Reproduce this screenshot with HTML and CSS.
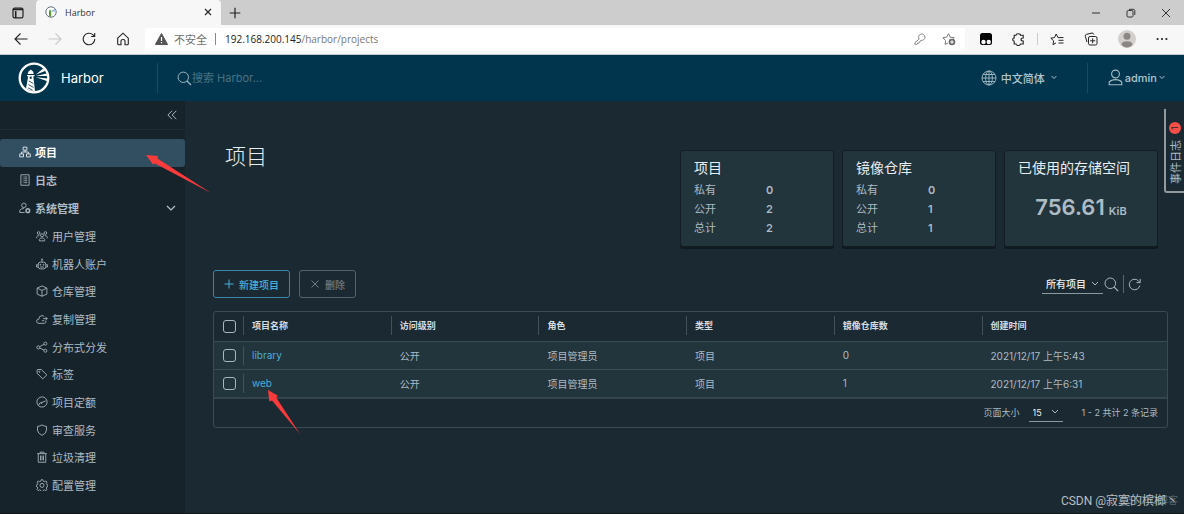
FILE: index.html
```html
<!DOCTYPE html>
<html lang="zh-CN">
<head>
<meta charset="utf-8">
<title>Harbor</title>
<link rel="stylesheet" href="styles.css">
</head>
<body>
<div class="tabbar">
  <button class="tab-menu" aria-label="标签页操作"><svg width="12" height="12" viewBox="0 0 12 12"><rect x="1" y="1.2" width="10" height="9.6" rx="1.6" fill="none" stroke="#222" stroke-width="1.2"/><path d="M1 2.5h10M3.7 4v7" stroke="#222" stroke-width="1.6"/></svg></button>
  <div class="tab">
    <svg width="12" height="12" viewBox="0 0 12 12"><circle cx="6" cy="6" r="5.2" fill="#fff" stroke="#56606a" stroke-width=".9"/><path d="M4 10.6V5l1-1.6L6.200 5v5.800z" fill="#5c9a3c"/><path d="M6.500 4.500 10 2.800l1 2.800-4.500.2z" fill="#9cc0df"/></svg>
    <span class="tab-title">Harbor</span>
    <button aria-label="关闭标签页"><svg width="8" height="8" viewBox="0 0 8 8"><path d="M1 1l6 6M7 1 1 7" stroke="#222" stroke-width="1.100"/></svg></button>
  </div>
  <button class="new-tab" aria-label="新建标签页"><svg width="12" height="12" viewBox="0 0 12 12"><path d="M6 .7v10.600M.7 6h10.600" stroke="#222" stroke-width="1.200"/></svg></button>
  <div class="window-buttons">
    <button aria-label="最小化"><svg width="10" height="10" viewBox="0 0 10 10"><path d="M1 5h8" stroke="#333"/></svg></button>
    <button aria-label="还原"><svg width="10" height="10" viewBox="0 0 10 10"><g fill="none" stroke="#333"><rect x="1" y="2.500" width="6" height="6.500" rx="1.200"/><path d="M3 1.300h4.300q1.500 0 1.500 1.500V7"/></g></svg></button>
    <button aria-label="关闭"><svg width="10" height="10" viewBox="0 0 10 10"><path d="M1 1l8 8M9 1 1 9" stroke="#333"/></svg></button>
  </div>
</div>

<div class="toolbar">
  <div class="nav-buttons">
    <button aria-label="后退"><svg width="14" height="14" viewBox="0 0 14 14"><path d="M13.500 7H1.200M6.500 1.500 1 7l5.500 5.500" fill="none" stroke="#222" stroke-width="1.100"/></svg></button>
    <button aria-label="前进" disabled><svg width="14" height="14" viewBox="0 0 14 14"><path d="M.5 7h12.300M7.500 1.500 13 7l-5.500 5.500" fill="none" stroke="#c9c9c9" stroke-width="1.100"/></svg></button>
    <button aria-label="刷新"><svg width="14" height="14" viewBox="0 0 14 14"><path d="M12.800 7A5.800 5.800 0 1 1 11 2.800L12.600 4.300M12.700 1v3.500H9.200" fill="none" stroke="#222" stroke-width="1.100"/></svg></button>
    <button aria-label="主页"><svg width="14" height="14" viewBox="0 0 14 14"><path d="M1.700 6.200 7 1.200l5.300 5V11.700q0 1-1 1H9V8.800Q9 7.500 7 7.500T5 8.800v3.900H2.700q-1 0-1-1z" fill="none" stroke="#222" stroke-width="1.100"/></svg></button>
  </div>
  <div class="address">
    <svg width="13" height="12" viewBox="0 0 13 12"><path d="M6.500.5 12.600 11.500H.4z" fill="#555" stroke="#555" stroke-linejoin="round"/><path d="M6.500 4v4M6.500 9v1.300" stroke="#fff" stroke-width="1.200"/></svg>
    <span class="insecure">不安全</span>
    <span class="address-rule"></span>
    <span class="url">192.168.200.145<span class="path">/harbor/projects</span></span>
    <button aria-label="密码"><svg width="12" height="12" viewBox="0 0 12 12"><path d="M5.200 6.100A3.200 3.200 0 1 1 7 7.300L6 8.200v1H5l-.2 1.100H3.500l-.3 1H.9V9.700zM8.700 3.400h.5" fill="none" stroke="#888"/></svg></button>
    <button aria-label="收藏"><svg width="14" height="14" viewBox="0 0 14 14"><path d="M6 11 3 12.400l.6-3.800L.9 5.800l3.700-.6L6.500 1.700l1.800 3.500 4 .5-1 1" fill="none" stroke="#777"/><circle cx="10" cy="10" r="3.300" fill="#666"/><path d="M10 8.200v3.600M8.200 10h3.600" stroke="#fff"/></svg></button>
  </div>
  <div class="tool-buttons">
    <button aria-label="扩展程序"><svg width="12" height="12" viewBox="0 0 12 12"><rect width="12" height="12" rx="2.500" fill="#000"/><circle cx="3.500" cy="9" r="2.200" fill="#fff"/><circle cx="8.700" cy="9" r="2.200" fill="#fff"/></svg></button>
    <button aria-label="扩展"><svg width="13" height="13" viewBox="0 0 13 13"><path d="M4 2.300Q4 .8 6.300.8T8.500 2.300H11.200V5Q9 5 9 6.500T11.200 8v3H8.500Q8.300 12.500 6.300 12.500T4 11H2.200V8.200Q.7 8 .7 6.500T2.200 5V2.300z" fill="none" stroke="#222" stroke-width="1.100"/></svg></button>
    <span class="tool-rule"></span>
    <button aria-label="收藏夹"><svg width="14" height="13" viewBox="0 0 14 13"><path d="M6 9.900 3 11.700l.6-3.900L.8 5.200l3.700-.6L6.200 1 8 4.600h5.500M8.500 7.300h5M8.500 10h5" fill="none" stroke="#222"/></svg></button>
    <button aria-label="集锦"><svg width="14" height="14" viewBox="0 0 14 14"><g fill="none" stroke="#222"><rect x="4.500" y="4.500" width="8.500" height="8.500" rx="1.600"/><path d="M3 10 1.300 4.300q-.4-1.500 1-1.900L8 1q1.200-.3 1.800 1.500M8.700 6.300v5M6.200 8.800h5"/></g></svg></button>
    <button aria-label="个人资料"><svg width="18" height="18" viewBox="0 0 18 18"><circle cx="9" cy="9" r="9" fill="#d3cfcc"/><circle cx="9" cy="6.300" r="3.500" fill="#8b8784"/><path d="M3.500 14.500Q4 11.300 9 11.300t5.500 3.200Q12.500 17.500 9 17.500t-5.500-3z" fill="#8b8784"/></svg></button>
    <button aria-label="设置及其他"><svg width="12" height="4" viewBox="0 0 12 4"><g fill="#222"><circle cx="1.600" cy="2" r="1.100"/><circle cx="6" cy="2" r="1.100"/><circle cx="10.400" cy="2" r="1.100"/></g></svg></button>
  </div>
</div>

<header class="header">
  <a class="brand" href="#">
    <svg width="32" height="32" viewBox="0 0 32 32"><circle cx="16" cy="16" r="14.300" fill="none" stroke="#fff" stroke-width="2.300"/><path d="M9 13h7.500v1.300h-1.200l1.700 14.700q-5 .5-9-2.500l2.200-12.200H9zM9.700 12 10.300 9.700 12.800 7.500 15.200 9.700l.5 2.300z" fill="#fff"/><path d="M10.800 19l4.600 2.500M10.400 22.500l5.200 3M10 25.800l4.600 2.500" stroke="#00364d" stroke-width=".8"/><path d="M11.700 14.600v2.200h2v-2.200z" fill="#00364d"/><path d="M18 12.500 25.200 6.500l2 2.500zM18 13.900l10.500-2.500.8 2.600zM18 15.200l11.500 1.400v2.600z" fill="#fff"/></svg>
    <span>Harbor</span>
  </a>
  <label class="search">
    <svg width="15" height="15" viewBox="0 0 15 15"><circle cx="6.300" cy="6.300" r="5.200" fill="none" stroke="#9bb3be"/><path d="M10 10l4 4" stroke="#9bb3be" stroke-width="1.200"/></svg>
    <input type="search" placeholder="搜索 Harbor..." aria-label="搜索 Harbor">
  </label>
  <button class="language">
    <svg width="16" height="16" viewBox="0 0 16 16"><g fill="none" stroke="#a6bbc5" stroke-width=".9"><circle cx="8" cy="8" r="7"/><ellipse cx="8" cy="8" rx="3.400" ry="7"/><path d="M8 1v14M1 8h14M2 4.500h12M2 11.500h12"/></g></svg>
    <span>中文简体</span>
    <svg width="6" height="5" viewBox="0 0 6 5"><path d="M.6 1 3 3.500 5.400 1" fill="none" stroke="#a6bbc5"/></svg>
  </button>
  <button class="account">
    <svg width="15" height="17" viewBox="0 0 15 17"><g fill="none" stroke="#a6bbc5" stroke-width="1.100"><circle cx="7.500" cy="5" r="3.900"/><path d="M1.200 15.700v-2.500Q3.200 10.600 7.500 10.600t6.300 2.600v2.500z"/></g></svg>
    <span>admin</span>
    <svg width="6" height="5" viewBox="0 0 6 5"><path d="M.6 1 3 3.500 5.400 1" fill="none" stroke="#a6bbc5"/></svg>
  </button>
</header>

<div class="body">
  <nav class="sidebar" aria-label="主导航">
    <div class="collapse"><button aria-label="收起"><svg width="10" height="10" viewBox="0 0 10 10"><path d="M5 .8.900 5 5 9.200M9.300.8 5.200 5l4.100 4.200" fill="none" stroke="#a9b6be"/></svg></button></div>
    <ul class="menu">
      <li><a class="item active" href="#"><svg class="icon" viewBox="0 0 16 16"><path d="M5.500 1.500h5v4h-5zM1 10.500h5v4H1zM10 10.500h5v4h-5zM8 5.500V8M3.500 10.500V8h9v2.500"/></svg>项目</a></li>
      <li><a class="item" href="#"><svg class="icon" viewBox="0 0 16 16"><path d="M2.500 1h11v14h-11zM5 4h1M7 4h4M5 6.500h1M7 6.500h4M5 9h1M7 9h4M5 11.500h1M7 11.500h4"/></svg>日志</a></li>
      <li>
        <button class="item"><svg class="icon" viewBox="0 0 16 16"><circle cx="6.500" cy="4.500" r="3"/><path d="M7.500 14H1v-3q1.500-2.300 5.500-2.300"/><circle cx="11.800" cy="11.500" r="2.400" stroke-width="2"/></svg>系统管理<svg class="caret" width="10" height="6" viewBox="0 0 10 6"><path d="M1 1l4 4 4-4" fill="none" stroke="#b6c3ca" stroke-width="1.200"/></svg></button>
        <ul class="submenu">
          <li><a href="#"><svg class="icon" viewBox="0 0 16 16"><circle cx="8" cy="7" r="2"/><path d="M4.500 14.500v-2q1-2 3.500-2t3.500 2v2z"/><circle cx="3.500" cy="4" r="1.800"/><circle cx="12.500" cy="4" r="1.800"/><path d="M1 11V9q.7-1.500 3.500-1.500M15 11V9q-.7-1.500-3.500-1.500"/></svg>用户管理</a></li>
          <li><a href="#"><svg class="icon" viewBox="0 0 16 16"><rect x="3" y="5.500" width="10" height="9" rx="3"/><path d="M8 5.500V2M3 9H.7v3H3M13 9h2.300v3H13M5.500 12h5"/><circle cx="8" cy="1.800" r=".7"/><circle cx="6" cy="9" r=".6"/><circle cx="10" cy="9" r=".6"/></svg>机器人账户</a></li>
          <li><a href="#"><svg class="icon" viewBox="0 0 16 16"><path d="M8 1.200 14.500 4.200v8L8 15l-6.500-2.800v-8zM1.500 4.200 8 7.200l6.500-3M8 7.200V15"/></svg>仓库管理</a></li>
          <li><a href="#"><svg class="icon" viewBox="0 0 16 16"><path d="M13.500 10.500q0 3.300-2.500 3.300H4Q.8 13.800.8 11T3.800 8.200Q4 3.500 8 3.500q2 0 3 1.500M9.500 7.500H15M12.800 5.300 15 7.500l-2.200 2.200M8 10.300h3"/></svg>复制管理</a></li>
          <li><a href="#"><svg class="icon" viewBox="0 0 16 16"><circle cx="3" cy="8.500" r="2"/><circle cx="12.500" cy="3.500" r="2"/><circle cx="12.500" cy="13" r="2"/><path d="M4.800 7.600 10.700 4.400M4.800 9.400l5.900 2.700"/></svg>分布式分发</a></li>
          <li><a href="#"><svg class="icon" viewBox="0 0 16 16"><path d="M1.500 2.500V7l7.500 7.500 5.500-5.300L7 2H2z"/><circle cx="4.500" cy="5" r=".8"/></svg>标签</a></li>
          <li><a href="#"><svg class="icon" viewBox="0 0 16 16"><circle cx="8" cy="8" r="6.800"/><path d="M3.500 12.500Q4 8.500 8 8.500l5-2M8 8.500 7 10.500"/></svg>项目定额</a></li>
          <li><a href="#"><svg class="icon" viewBox="0 0 16 16"><path d="M8 1.200Q10.500 3 14 3.200V8q0 4.500-6 7.200Q2 12.500 2 8V3.200Q5.500 3 8 1.200z"/></svg>审查服务</a></li>
          <li><a href="#"><svg class="icon" viewBox="0 0 16 16"><path d="M1.500 3.500h13M3 3.500V15h10V3.500M5.500 3.500v-2h5v2M6 6v6.500M8 6v6.500M10 6v6.500"/></svg>垃圾清理</a></li>
          <li><a href="#"><svg class="icon" viewBox="0 0 16 16"><path d="M6.800 1h2.400l.5 2 1.600.7 1.900-1.100 1.500 1.600-1 1.900.7 1.500 1.600.4v2l-1.700.5-.6 1.600 1 1.900-1.600 1.500-1.800-1-1.600.6-.5 1.900H6.800l-.5-1.900-1.600-.6-1.900 1-1.500-1.600 1-1.800-.6-1.600L.5 10V8l1.300-.4.6-1.600-1-1.800 1.500-1.600 1.800 1L6.300 3z"/><circle cx="8" cy="8.500" r="2.700"/></svg>配置管理</a></li>
        </ul>
      </li>
    </ul>
  </nav>

  <main class="content">
    <div class="summary">
      <h1>项目</h1>
      <section class="card">
        <h2>项目</h2>
        <dl><dt>私有</dt><dd>0</dd><dt>公开</dt><dd>2</dd><dt>总计</dt><dd>2</dd></dl>
      </section>
      <section class="card">
        <h2>镜像仓库</h2>
        <dl><dt>私有</dt><dd>0</dd><dt>公开</dt><dd>1</dd><dt>总计</dt><dd>1</dd></dl>
      </section>
      <section class="card">
        <h2>已使用的存储空间</h2>
        <p class="storage"><span>756.61</span><small>KiB</small></p>
      </section>
    </div>

    <div class="actions">
      <button class="btn primary"><svg width="10" height="10" viewBox="0 0 10 10"><path d="M5 .5v9M.5 5h9" stroke="currentColor"/></svg>新建项目</button>
      <button class="btn" disabled><svg width="10" height="10" viewBox="0 0 10 10"><path d="M1.500 1.500l7 7M8.500 1.500l-7 7" stroke="currentColor"/></svg>删除</button>
      <div class="filters">
        <span class="select filter-select"><select aria-label="项目筛选"><option>所有项目</option></select><svg width="8" height="6" viewBox="0 0 8 6"><path d="M1 1l3 3 3-3" fill="none" stroke="#a9b6be"/></svg></span>
        <button aria-label="搜索"><svg width="15" height="15" viewBox="0 0 15 15"><circle cx="6.300" cy="6.300" r="5.300" fill="none" stroke="#a9b6be"/><path d="M10.200 10.200l4 4" stroke="#a9b6be" stroke-width="1.200"/></svg></button>
        <span class="filter-rule"></span>
        <button aria-label="刷新列表"><svg width="13" height="13" viewBox="0 0 13 13"><path d="M11.800 7.500A5.300 5.300 0 1 1 10.300 2.700L12 4.400M12.200.8v3.800H8.500" fill="none" stroke="#a9b6be"/></svg></button>
      </div>
    </div>

    <div class="datagrid">
      <table>
        <colgroup><col class="col-check"><col class="col"><col class="col"><col class="col"><col class="col"><col class="col"><col></colgroup>
        <thead><tr>
          <th><input type="checkbox" aria-label="全选"></th>
          <th><span>项目名称</span></th><th><span>访问级别</span></th><th><span>角色</span></th><th><span>类型</span></th><th><span>镜像仓库数</span></th><th><span>创建时间</span></th>
        </tr></thead>
        <tbody>
          <tr><td><input type="checkbox" aria-label="选择 library"></td><td><span><a href="#">library</a></span></td><td>公开</td><td>项目管理员</td><td>项目</td><td>0</td><td>2021/12/17 上午5:43</td></tr>
          <tr><td><input type="checkbox" aria-label="选择 web"></td><td><span><a href="#">web</a></span></td><td>公开</td><td>项目管理员</td><td>项目</td><td>1</td><td>2021/12/17 上午6:31</td></tr>
        </tbody>
      </table>
      <div class="pager">
        <label for="page-size">页面大小</label>
        <span class="select page-select"><select id="page-size"><option>15</option></select><svg width="8" height="6" viewBox="0 0 8 6"><path d="M1 1l3 3 3-3" fill="none" stroke="#a9b6be"/></svg></span>
        <span>1 - 2 共计 2 条记录</span>
      </div>
    </div>
  </main>
</div>

<button class="event-log">事件日志<span class="badge">1</span></button>
<svg class="pointer pointer-menu" width="65" height="38" viewBox="0 0 65 38"><path d="M0 0 12 1 11.500 3.500 65 38 9 8.500 7 9.500z" fill="#fb3b3b"/></svg>
<svg class="pointer pointer-row" width="32" height="44" viewBox="0 0 32 44"><path d="M0 0 9.500 5.500 8.500 8 32 44 4 10.500 1.300 11.500z" fill="#fb3b3b"/></svg>
<div class="watermark site">@51CTO博客</div>
<div class="watermark author">CSDN @寂寞的槟榔丶</div>
</body>
</html>
```
FILE: styles.css
```css
* { box-sizing: border-box; }

body {
  margin: 0;
  min-height: 100vh;
  display: flex;
  flex-direction: column;
  position: relative;
  background: #1b2a32;
  border-bottom: 1px solid #0e161b;
  color: #adbbc4;
  font-family: Inter, "Noto Sans CJK SC", sans-serif;
  font-size: 10px;
}

button, input, select { font: inherit; color: inherit; }
button { display: flex; align-items: center; padding: 0; border: 0; background: none; }
svg { display: block; flex: none; }
a { color: inherit; text-decoration: none; }
ul { margin: 0; padding: 0; list-style: none; }

/* Browser frame */
.tabbar, .toolbar { display: flex; align-items: center; font-family: "Open Sans", "Noto Sans CJK SC", sans-serif; }
.tabbar { height: 25px; background: #cdcdcd; }
.tab-menu { width: 36px; justify-content: center; }
.tab {
  width: 185px;
  height: 25px;
  padding: 0 9px 1px;
  display: flex;
  align-items: center;
  gap: 8px;
  border-radius: 4px 4px 0 0;
  background: #f7f7f7;
  color: #333;
  font-size: 9px;
}
.tab-title { flex: 1; }
.new-tab { margin-left: 8px; }
.window-buttons { margin-left: auto; padding-right: 13px; display: flex; gap: 25px; }

.toolbar { height: 30px; padding-bottom: 1px; background: #f7f7f7; border-bottom: 1px solid #c4c8ca; }
.nav-buttons { width: 145px; padding-left: 14px; display: flex; gap: 20px; }
.address {
  flex: 1;
  height: 23px;
  padding: 0 9px 0 10px;
  display: flex;
  align-items: center;
  gap: 6px;
  border-radius: 3px;
  background: #fff;
  font-size: 10px;
}
.insecure { color: #707070; font-size: 11px; }
.address-rule { width: 1px; height: 12px; margin: 0 3px 0 2px; background: #888; }
.url { flex: 1; color: #222; }
.path { color: #777; }
.address button + button { margin-left: 10px; }
.tool-buttons { width: 219px; padding: 0 16px 0 15px; display: flex; align-items: center; gap: 20px; }
.tool-rule { width: 1px; height: 12px; margin: 0 -8px; background: #ccc; }

/* Application header */
.header { height: 46px; display: flex; align-items: center; background: #00364d; color: #b3c5cd; }
.brand { width: 158px; height: 30px; padding-left: 18px; display: flex; align-items: center; gap: 11px; border-right: 1px solid #1c4a5e; color: #fff; font-size: 13px; }
.search { flex: 1; padding-left: 19px; display: flex; align-items: center; }
.search input { flex: 1; padding: 0; border: 0; outline: 0; background: none; font-size: 11px; }
.search input::placeholder { color: #4b7183; opacity: 1; }
.language, .account { height: 30px; padding-bottom: 1px; font-size: 11px; font-weight: 500; }
.language { gap: 4px; padding-right: 30px; border-right: 1px solid #1c4a5e; }
.language span { margin-right: 2px; }
.account { gap: 2px; padding-left: 20px; padding-right: 19px; }

/* Sidebar */
.body { flex: 1; display: flex; }
.sidebar { width: 185px; flex: none; background: #17232b; font-size: 11px; }
.collapse { height: 29px; padding-right: 8px; display: flex; justify-content: flex-end; border-bottom: 1px solid #1f2d35; }
.menu { padding-top: 9px; }
.item, .submenu a { width: 100%; display: flex; align-items: center; gap: 5px; padding-bottom: 2px; }
.item { height: 28px; padding-left: 19px; padding-right: 9px; border-radius: 3px; font-weight: 700; }
.item.active { background: #324f62; color: #fff; }
.submenu { height: 277px; display: flex; flex-direction: column; }
.submenu li { flex: 1; display: flex; }
.submenu a { padding-left: 36px; gap: 4px; }
.icon { width: 12px; height: 12px; fill: none; stroke: #a4b2bb; stroke-width: 1.200; }
.active .icon { stroke: #e4ebef; }
.item .icon { margin-right: -1px; }
.caret { margin-left: auto; }

/* Content */
.content { flex: 1; min-width: 0; padding: 49px 16px 16px 28px; }
.summary { display: flex; gap: 8px; padding: 0 10px 0 12px; }
h1 { flex: 1; margin: -8px 0 0; color: #e9eef1; font-size: 21px; font-weight: 300; line-height: 30px; }
.card {
  width: 154px;
  height: 97px;
  padding: 7px 13px;
  border: 1px solid #131e24;
  border-radius: 3px;
  box-shadow: 0 2px 0 #0f191e;
  background: #22343c;
}
h2 { margin: 0; color: #e9eef1; font-size: 14px; font-weight: 400; line-height: 20px; white-space: nowrap; }
dl { margin: 3px 0 0; display: grid; grid-template-columns: 72px 1fr; font-size: 11px; line-height: 19px; }
dd { margin: 0; font-weight: 600; }
.storage { margin: 14px 0 0; display: flex; align-items: baseline; justify-content: center; gap: 4px; font-size: 22px; font-weight: 600; line-height: 30px; }
.storage small { font-size: 11px; }

.actions { margin-top: 23px; display: flex; align-items: center; gap: 9px; }
.btn { height: 28px; padding: 0 10px; gap: 5px; border: 1px solid #55646c; border-radius: 3px; color: #6f7e86; font-weight: 500; }
.btn.primary { border-color: #3a86a8; color: #49afd9; }
.filters { margin-left: auto; padding-right: 27px; display: flex; align-items: center; gap: 4px; }
.filter-select + button { margin-left: -3px; }
.filter-rule { width: 1px; height: 18px; background: #56656d; }

.select { display: grid; align-items: center; border-bottom: 1px solid #8b99a1; color: #e9eef1; }
.select select, .select svg { grid-area: 1 / 1; }
.select select { width: 100%; height: 18px; padding: 0 0 0 4px; border: 0; outline: 0; background: none; appearance: none; }
.select svg { justify-self: end; margin-right: 4px; pointer-events: none; }
.filter-select { width: 61px; font-weight: 500; }
.page-select { width: 34px; margin: 0 19px 0 9px; }

.datagrid { margin-top: 13px; border: 1px solid #3a4b54; border-radius: 3px; overflow: hidden; }
table { width: 100%; table-layout: fixed; border-collapse: collapse; text-align: left; }
.col-check { width: 29px; }
.col { width: 15.5%; }
th, td { height: 28px; padding: 0 0 0 9px; white-space: nowrap; }
th { height: 29px; padding: 0 0 1px; color: #d5dde2; font-size: 9px; font-weight: 600; }
th:first-child, td:first-child { padding: 0 0 0 9px; }
td { border-top: 1px solid #3a4b54; }
tbody tr { background: #22343c; }
td:nth-child(2) { padding-left: 0; }
th span, td span { display: block; padding-left: 8px; border-left: 1px solid #41525b; line-height: 19px; }
td a { color: #49afd9; }
td input, th input {
  display: block;
  width: 13px;
  height: 13px;
  margin: 0;
  appearance: none;
  border: 1px solid #a9b6be;
  border-radius: 3px;
}
.pager { height: 30px; padding: 0 9px 1px 0; display: flex; align-items: center; justify-content: flex-end; border-top: 2px solid #34454e; font-size: 9px; }

/* Overlays */
.event-log {
  position: absolute;
  top: 109px;
  right: 0;
  width: 20px;
  height: 84px;
  gap: 6px;
  padding-top: 7px;
  writing-mode: vertical-rl;
  text-orientation: sideways;
  transform: rotate(180deg);
  border-right: 2px solid #929a9e;
  border-top: 2px solid #929a9e;
  border-radius: 0 3px 0 0;
  background: #1b2a32;
  font-size: 11px;
}
.badge { width: 12px; height: 12px; border-radius: 6px; background: #f54f47; color: #1b2a32; font-size: 9px; line-height: 12px; text-align: center; }
.pointer { position: absolute; pointer-events: none; }
.pointer-menu { left: 146px; top: 155px; }
.pointer-row { left: 268px; top: 390px; }
.watermark { position: absolute; bottom: 3px; line-height: 18px; white-space: nowrap; font-family: Roboto, "Noto Sans CJK SC", sans-serif; }
.author { right: 6px; color: #b9bec1; font-size: 12px; }
.site { right: 6px; color: #55626a; font-size: 10px; }
```
